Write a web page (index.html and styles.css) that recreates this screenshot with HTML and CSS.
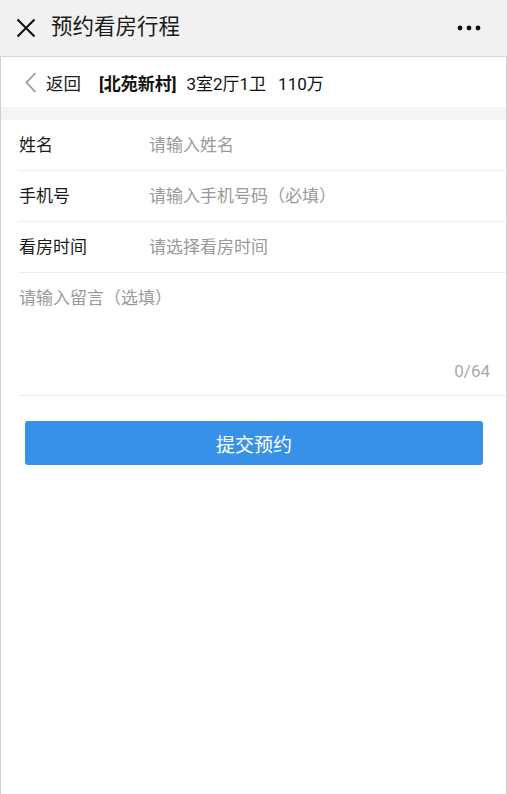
FILE: index.html
```html
<!DOCTYPE html>
<html lang="zh-CN">
<head>
<meta charset="utf-8">
<title>预约看房行程</title>
<link rel="stylesheet" href="styles.css">
</head>
<body>
<div class="page">
  <header class="topbar">
    <svg class="close" width="20" height="20" viewBox="0 0 20 20"><path d="M1.5 1.5 L18.5 18.5 M18.5 1.5 L1.5 18.5" stroke="#111" stroke-width="2.1" fill="none"/></svg>
    <h1 class="title">预约看房行程</h1>
    <svg class="more" width="24" height="6" viewBox="0 0 24 6"><circle cx="3" cy="3" r="2.4" fill="#111"/><circle cx="12" cy="3" r="2.4" fill="#111"/><circle cx="21" cy="3" r="2.4" fill="#111"/></svg>
  </header>
  <main class="content">
    <div class="subbar">
      <svg class="back" width="12" height="21" viewBox="0 0 12 21"><path d="M10.5 1 L1.5 10.5 L10.5 20" stroke="#9a9a9a" stroke-width="1.8" fill="none"/></svg>
      <span class="back-text">返回</span>
      <span class="estate">[北苑新村]</span>
      <span class="info">3室2厅1卫</span>
      <span class="price">110万</span>
    </div>
    <div class="gap"></div>
    <div class="form">
      <div class="row"><span class="label">姓名</span><span class="ph">请输入姓名</span></div>
      <div class="row"><span class="label">手机号</span><span class="ph">请输入手机号码（必填）</span></div>
      <div class="row"><span class="label">看房时间</span><span class="ph">请选择看房时间</span></div>
      <div class="message">
        <span class="ph">请输入留言（选填）</span>
        <span class="count">0/64</span>
      </div>
    </div>
    <div class="btn">提交预约</div>
  </main>
</div>
</body>
</html>
```

FILE: styles.css
```css
* { box-sizing: border-box; }
html, body { margin: 0; padding: 0; background: #fff; }
body {
  font-family: Roboto, "Noto Sans CJK SC", "Noto Sans", sans-serif;
  color: #1a1a1a;
}
.page {
  width: 507px;
  min-height: 794px;
  display: flex;
  flex-direction: column;
}
.topbar {
  height: 57px;
  background: #f1f1f1;
  border-bottom: 1px solid #d8d8d8;
  display: flex;
  align-items: center;
  padding-left: 16px;
  padding-right: 26px;
}
.close { flex: none; }
.title {
  margin: 0 0 0 15px;
  font-size: 21.5px;
  font-weight: 400;
  color: #1a1a1a;
  flex: 1;
  line-height: 1;
  position: relative;
  top: -1px;
}
.more { flex: none; }
.content {
  flex: 1;
  border-left: 1px solid #cfcfcf;
  border-right: 1px solid #cfcfcf;
}
.subbar {
  height: 50px;
  display: flex;
  align-items: center;
  padding-left: 24px;
  font-size: 17px;
}
.back { flex: none; margin-right: 9px; }
.back-text { color: #222; margin-right: 18px; font-size: 17.5px; }
.estate { font-weight: 700; color: #111; margin-right: 10px; }
.info { color: #111; margin-right: 12px; }
.price { color: #111; }
.gap { height: 13px; background: #f4f4f4; }
.form { padding-left: 17px; }
.row {
  height: 51px;
  border-bottom: 1px solid #ececec;
  display: flex;
  align-items: center;
  font-size: 17px;
  padding-bottom: 4px;
}
.label { width: 131px; flex: none; color: #1a1a1a; padding-left: 1px; }
.ph { color: #9a9a9a; }
.message {
  height: 123px;
  border-bottom: 1px solid #ececec;
  display: flex;
  flex-direction: column;
  justify-content: space-between;
  font-size: 17px;
  padding: 11px 16px 14px 1px;
}
.count { align-self: flex-end; color: #a8a8a8; font-size: 17px; }
.btn {
  margin: 25px 23px 0 24px;
  height: 44px;
  background: #3891e8;
  border-radius: 3px;
  color: #fff;
  font-size: 19px;
  display: flex;
  align-items: center;
  justify-content: center;
}
```
